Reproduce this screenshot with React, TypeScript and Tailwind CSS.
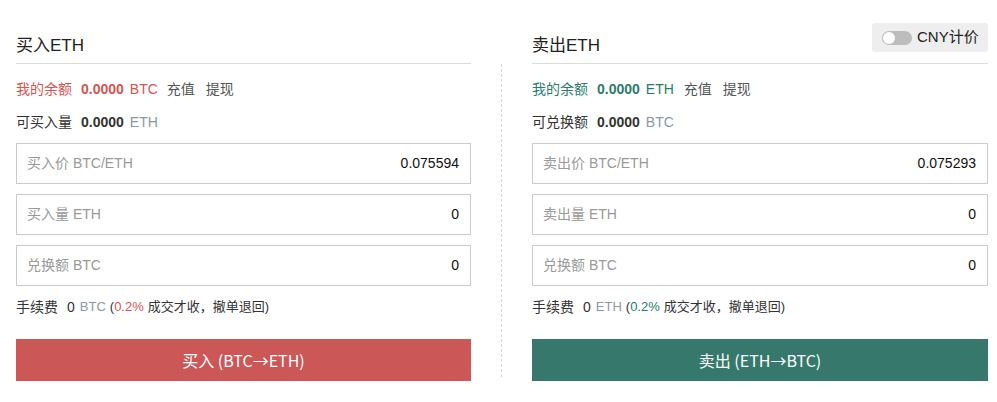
import React from "react";

const font = { fontFamily: '"Liberation Sans", Arial, "Noto Sans CJK SC", sans-serif' };
const btnFont = { fontFamily: '"Noto Sans CJK SC", "Liberation Sans", sans-serif' };

function Field({ label, value }: { label: string; value: string }) {
  return (
    <div className="flex h-[41px] items-center justify-between border border-[#cccccc] pl-[10px] pr-[11px]">
      <span className="text-[14px] text-[#999999]">{label}</span>
      <span className="text-[14px] text-[#111111]">{value}</span>
    </div>
  );
}

function Panel({ side }: { side: "buy" | "sell" }) {
  const buy = side === "buy";
  const accent = buy ? "text-[#d9534f]" : "text-[#2a7d6c]";
  const btn = buy ? "bg-[#cc5757]" : "bg-[#36796c]";
  const coinA = buy ? "BTC" : "ETH";
  const coinB = buy ? "ETH" : "BTC";
  return (
    <div className="flex flex-col">
      <div className="flex h-[36px] items-center border-b border-[#d6dde3] text-[17px] text-[#222222]">
        {buy ? "买入ETH" : "卖出ETH"}
      </div>
      <div className={`mt-[15px] flex h-[20px] items-center text-[14px] ${accent}`}>
        <span>我的余额</span>
        <span className="ml-[9px] font-bold">0.0000</span>
        <span className="ml-[6px]">{coinA}</span>
        <span className={buy ? "ml-[9px] text-[#555555]" : "ml-[10px] text-[#555555]"}>充值</span>
        <span className="ml-[11px] text-[#555555]">提现</span>
      </div>
      <div className="mt-[13px] flex h-[20px] items-center text-[14px] text-[#333333]">
        <span>{buy ? "可买入量" : "可兑换额"}</span>
        <span className="ml-[9px] font-bold">0.0000</span>
        <span className="ml-[6px] text-[#8b98a5]">{coinB}</span>
      </div>
      <div className="mt-[11px] flex flex-col gap-[10px]">
        <Field label={buy ? "买入价 BTC/ETH" : "卖出价 BTC/ETH"} value={buy ? "0.075594" : "0.075293"} />
        <Field label={buy ? "买入量 ETH" : "卖出量 ETH"} value="0" />
        <Field label="兑换额 BTC" value="0" />
      </div>
      <div className="mt-[11px] flex h-[20px] items-center text-[13px] text-[#333333]">
        <span className="text-[14px]">手续费</span>
        <span className="ml-[9px] text-[14px]">0</span>
        <span className="ml-[5px] text-[#8b98a5]">{coinA}</span>
        <span className="ml-[4px]">(</span>
        <span className={buy ? "text-[#d9534f]" : "text-[#2a7d6c]"}>0.2%</span>
        <span className="ml-[4px]">成交才收，撤单退回)</span>
      </div>
      <div
        className={`mt-[22px] flex h-[42px] items-center justify-center text-[16px] text-white ${btn}`}
        style={btnFont}
      >
        {buy ? "买入 (BTC→ETH)" : "卖出 (ETH→BTC)"}
      </div>
    </div>
  );
}

export default function App() {
  return (
    <div className="relative h-[402px] w-[997px] bg-white" style={font}>
      <div className="flex pl-[16px] pr-[9px] pt-[28px]">
        <div className="w-[455px]">
          <Panel side="buy" />
        </div>
        <div className="flex w-[61px] justify-start pl-[30px] pt-[36px]">
          <div className="h-[313px] border-l border-dashed border-[#cfd8df]" />
        </div>
        <div className="flex-1">
          <Panel side="sell" />
        </div>
      </div>
      <div className="absolute right-[9px] top-[23px] flex h-[29px] w-[116px] items-center rounded-[3px] bg-[#eeeeee] pl-[10px]">
        <div className="relative h-[14px] w-[30px] rounded-full bg-[#bdbdbd]">
          <div className="absolute left-[1px] top-[1px] h-[12px] w-[12px] rounded-full bg-white" />
        </div>
        <span className="ml-[5px] text-[15px] text-[#222222]">CNY计价</span>
      </div>
    </div>
  );
}
